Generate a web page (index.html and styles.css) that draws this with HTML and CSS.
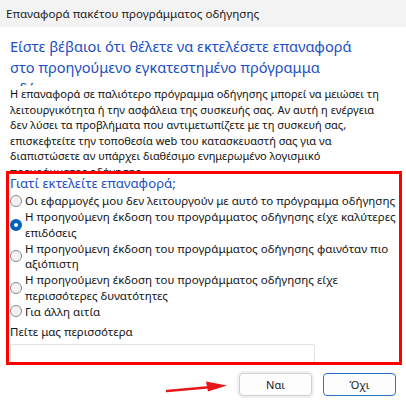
FILE: index.html
```html
<!DOCTYPE html>
<html lang="el">
<head>
    <meta charset="UTF-8">
    <meta name="viewport" content="width=device-width, initial-scale=1.0">
    <title>Επαναφορά πακέτου προγράμματος οδήγησης</title>
    <link rel="stylesheet" href="styles.css">
</head>
<body>
    <div class="title-bar">Επαναφορά πακέτου προγράμματος οδήγησης</div>

    <div class="content">
        <h1 class="main-instruction">Είστε βέβαιοι ότι θέλετε να εκτελέσετε επαναφορά στο προηγούμενο εγκατεστημένο πρόγραμμα οδήγησης;</h1>
        <p class="description">Η επαναφορά σε παλιότερο πρόγραμμα οδήγησης μπορεί να μειώσει τη λειτουργικότητα ή την ασφάλεια της συσκευής σας. Αν αυτή η ενέργεια δεν λύσει τα προβλήματα που αντιμετωπίζετε με τη συσκευή σας, επισκεφτείτε την τοποθεσία web του κατασκευαστή σας για να διαπιστώσετε αν υπάρχει διαθέσιμο ενημερωμένο λογισμικό προγράμματος οδήγησης.</p>
    </div>

    <div class="reason-box">
        <h2 class="reason-title">Γιατί εκτελείτε επαναφορά;</h2>
        <label class="radio-row">
            <input type="radio" name="reason">
            <span>Οι εφαρμογές μου δεν λειτουργούν με αυτό το πρόγραμμα οδήγησης</span>
        </label>
        <label class="radio-row">
            <input type="radio" name="reason" checked>
            <span>Η προηγούμενη έκδοση του προγράμματος οδήγησης είχε καλύτερες επιδόσεις</span>
        </label>
        <label class="radio-row">
            <input type="radio" name="reason">
            <span>Η προηγούμενη έκδοση του προγράμματος οδήγησης φαινόταν πιο αξιόπιστη</span>
        </label>
        <label class="radio-row">
            <input type="radio" name="reason">
            <span>Η προηγούμενη έκδοση του προγράμματος οδήγησης είχε περισσότερες δυνατότητες</span>
        </label>
        <label class="radio-row">
            <input type="radio" name="reason">
            <span>Για άλλη αιτία</span>
        </label>
        <div class="more-label">Πείτε μας περισσότερα</div>
        <input type="text" class="more-input">
    </div>

    <div class="footer">
        <svg class="arrow" width="62" height="14" viewBox="0 0 62 14">
            <line x1="1" y1="11" x2="46" y2="7" stroke="#e8151a" stroke-width="2.6" stroke-linecap="round"/>
            <polygon points="40,1.5 61,5.5 42,11.5" fill="#e8151a"/>
        </svg>
        <button class="btn btn-yes">Ναι</button>
        <button class="btn btn-no">Όχι</button>
    </div>
</body>
</html>
```

FILE: styles.css
```css
body {
    margin: 0;
    width: 406px;
    height: 406px;
    overflow: hidden;
    background: #ffffff;
    font-family: "Noto Sans", "Open Sans", sans-serif;
    font-size: 11px;
    color: #000000;
}
.title-bar {
    height: 27px;
    line-height: 27px;
    padding-left: 6px;
    background: #f3f3f3;
    font-size: 11.6px;
    color: #1a1a1a;
}
.content {
    padding: 0 10px;
}
.main-instruction {
    width: 370px;
    margin: 9px 0 0 0;
    height: 50px;
    overflow: hidden;
    font-size: 14.6px;
    font-weight: 400;
    line-height: 21px;
    color: #1c4fc4;
}
.description {
    width: 378px;
    margin: 0;
    height: 85px;
    overflow: hidden;
    line-height: 15.5px;
    color: #111111;
}
.reason-box {
    margin: 0 4px 0 6px;
    height: 188px;
    border: 3px solid #ff0000;
    padding: 0 0 0 1px;
    overflow: hidden;
}
.reason-title {
    margin: 0;
    height: 19px;
    font-size: 13.2px;
    font-weight: 400;
    line-height: 19px;
    color: #1c4fc4;
}
.radio-row {
    display: flex;
    align-items: center;
    gap: 3px;
    font-size: 11.5px;
    line-height: 15.5px;
    margin-bottom: 0.5px;
    color: #141414;
}
.radio-row input {
    appearance: none;
    flex: none;
    width: 12px;
    height: 12px;
    margin: 0;
    border: 1px solid #8a8a8a;
    border-radius: 50%;
    background: #f2f2f2;
}
.radio-row input:checked {
    border: 4px solid #0062b8;
    background: #ffffff;
}
.more-label {
    margin-top: 5px;
    font-size: 11.5px;
    line-height: 15.5px;
    color: #141414;
}
.more-input {
    display: block;
    box-sizing: border-box;
    width: 305px;
    height: 22px;
    margin: 4px 0 0 0;
    border: 1px solid #e3e3e3;
    border-radius: 2px;
    background: #ffffff;
}
.footer {
    display: flex;
    justify-content: flex-end;
    align-items: center;
    gap: 11px;
    margin-top: 8px;
    padding-right: 10px;
}
.arrow {
    margin-top: 4px;
}
.btn {
    width: 73px;
    height: 23px;
    border-radius: 4px;
    background: #fdfdfd;
    font-family: "Noto Sans", "Open Sans", sans-serif;
    font-size: 11px;
    color: #1a1a1a;
    cursor: pointer;
}
.btn-yes {
    border: 1px solid #d0d0d0;
    box-shadow: 0 0 0 2px #f0f0f0;
}
.btn-no {
    border: 1px solid #2b73c8;
}
```
